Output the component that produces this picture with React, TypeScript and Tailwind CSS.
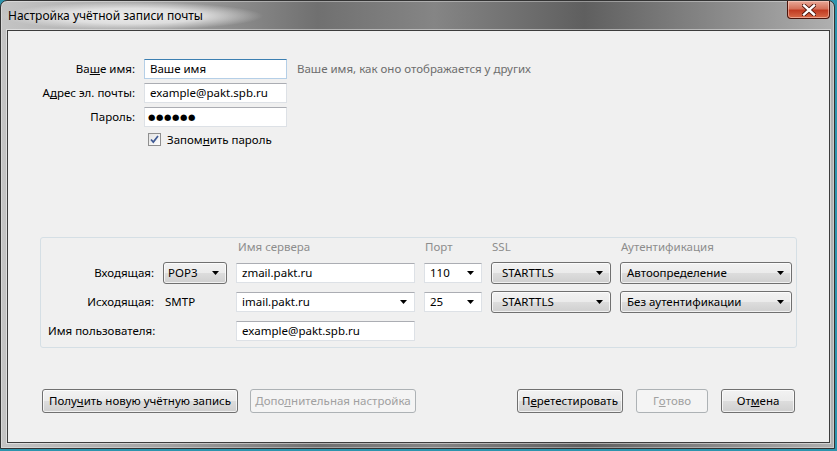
import React from "react"

const font = { fontFamily: '"Noto Sans", "Open Sans", sans-serif' }

function Arrow() {
  return (
    <svg width="7" height="4" viewBox="0 0 7 4" className="shrink-0">
      <path d="M0 0h7L3.5 4z" fill="#000" />
    </svg>
  )
}

function TextBox({ value, w, focused }: { value: string; w: string; focused?: boolean }) {
  return (
    <div
      className={`${w} h-[20px] bg-white border flex items-center px-[5px] text-black ${
        focused ? "border-[#b5cfe7] border-t-[#3c7fb1]" : "border-[#dde1e6] border-t-[#abadb3]"
      }`}
    >
      {value}
    </div>
  )
}

function Combo({ value, w }: { value: string; w: string }) {
  return (
    <div className={`${w} h-[20px] bg-white border border-[#dde1e6] border-t-[#abadb3] flex items-center justify-between pl-[5px] pr-[7px]`}>
      <span>{value}</span>
      <Arrow />
    </div>
  )
}

function SelectBtn({ value, w, pad }: { value: string; w: string; pad: string }) {
  return (
    <div
      className={`${w} ${pad} h-[22px] rounded-[3px] border border-[#707070] bg-[linear-gradient(#f2f2f2,#ebebeb_50%,#dddddd_50%,#cfcfcf)] shadow-[inset_0_0_0_1px_rgba(255,255,255,0.7)] flex items-center justify-between pr-[7px]`}
    >
      <span>{value}</span>
      <Arrow />
    </div>
  )
}

function Button({ children, w, disabled }: { children: React.ReactNode; w: string; disabled?: boolean }) {
  return (
    <div
      className={`${w} h-[24px] rounded-[3px] border flex items-center justify-center ${
        disabled
          ? "border-[#adb2b5] bg-[#f4f4f4] text-[#a0a0a0]"
          : "border-[#707070] bg-[linear-gradient(#f2f2f2,#ebebeb_50%,#dddddd_50%,#cfcfcf)] shadow-[inset_0_0_0_1px_rgba(255,255,255,0.7)] text-black"
      }`}
    >
      {children}
    </div>
  )
}

export default function App() {
  return (
    <div className="w-[837px] h-[451px] overflow-hidden bg-[#2d94ad] text-[11.5px] leading-none" style={font}>
      <div className="w-[835px] h-[449px] flex flex-col rounded-t-[7px] border border-[#333] bg-[linear-gradient(90deg,#c4c4c4_0%,#a2a2a2_20%,#707070_38%,#858585_52%,#5f5f5f_70%,#8e8e8e_88%,#b0b0b0_100%)] shadow-[inset_0_0_0_1px_rgba(255,255,255,0.35)]">
        {/* title bar */}
        <div className="h-[29px] flex justify-between shrink-0">
          <div className="mt-[1px] h-[28px] pl-[7px] pr-[60px] flex items-center text-black text-[12px] bg-[radial-gradient(closest-side,rgba(240,240,240,0.95)_0%,rgba(235,235,235,0.8)_55%,rgba(220,220,220,0)_100%)]">
            Настройка учётной записи почты
          </div>
          <div className="mr-[4px] w-[43px] h-[18px] rounded-b-[4px] border border-t-0 border-[#4a140b] bg-[linear-gradient(#e9a897,#d5725b_45%,#c13b22_55%,#d86a48)] shadow-[inset_0_0_0_1px_rgba(255,220,210,0.5)] flex items-center justify-center">
            <svg width="14" height="12" viewBox="0 0 14 12">
              <path d="M2 1.5l10 9M12 1.5l-10 9" stroke="#4b1209" strokeWidth="4.2" strokeLinecap="square" />
              <path d="M2 1.5l10 9M12 1.5l-10 9" stroke="#fff" strokeWidth="2.4" strokeLinecap="square" />
            </svg>
          </div>
        </div>

        {/* client area */}
        <div className="flex-1 ml-[6px] mr-[4px] mb-[5px] border border-[#3c3c3c] bg-[#f0f0f0] flex flex-col shadow-[0_0_0_1px_rgba(255,255,255,0.45)]">
          {/* account form */}
          <div className="pt-[28px] grid grid-cols-[127px_143px_auto] gap-x-[9px] gap-y-[4px] items-center">
            <div className="text-right">
              Ва<u>ш</u>е имя:
            </div>
            <TextBox value="Ваше имя" w="w-[143px]" focused />
            <div className="pl-[1px] text-[#6d6d6d]">Ваше имя, как оно отображается у других</div>

            <div className="text-right">
              А<u>д</u>рес эл. почты:
            </div>
            <TextBox value="example@pakt.spb.ru" w="w-[143px]" />
            <div />

            <div className="text-right">Пароль:</div>
            <div
              className="w-[143px] h-[20px] bg-white border border-[#dde1e6] border-t-[#abadb3] flex items-center px-[3px] text-[8.5px] tracking-[0.6px]"
              style={{ fontFamily: '"DejaVu Sans", sans-serif' }}
            >
              ●●●●●●
            </div>
            <div />
          </div>

          <div className="mt-[6px] ml-[140px] flex items-center gap-[6px]">
            <div className="w-[13px] h-[13px] border border-[#8f8f8f] bg-[linear-gradient(135deg,#e2e2e2,#fff)] flex items-center justify-center">
              <svg width="9" height="9" viewBox="0 0 9 9">
                <path d="M1 4.5l2.3 2.6L8 1" stroke="#3f5a94" strokeWidth="1.7" fill="none" />
              </svg>
            </div>
            <span>
              Запом<u>н</u>ить пароль
            </span>
          </div>

          {/* server settings */}
          <div className="mt-[91px] ml-[32px] mr-[32px] h-[111px] rounded-[3px] border border-[#d5dfe5] pl-[7px] pt-[1px]">
            <div className="grid grid-cols-[106px_64px_179px_58px_120px_172px] gap-x-[9px] gap-y-[7px] items-center">
              <div className="h-[16px]" />
              <div />
              <div className="pl-[2px] text-[#8d8d8d]">Имя сервера</div>
              <div className="pl-[1px] text-[#8d8d8d]">Порт</div>
              <div className="pl-[1px] text-[#8d8d8d]">SSL</div>
              <div className="pl-[1px] text-[#8d8d8d]">Аутентификация</div>

              <div className="text-right">Входящая:</div>
              <SelectBtn value="POP3" w="w-[64px]" pad="pl-[4px]" />
              <TextBox value="zmail.pakt.ru" w="w-[179px]" />
              <Combo value="110" w="w-[58px]" />
              <SelectBtn value="STARTTLS" w="w-[120px]" pad="pl-[10px]" />
              <SelectBtn value="Автоопределение" w="w-[172px]" pad="pl-[6px]" />

              <div className="h-[22px] flex items-center justify-end">Исходящая:</div>
              <div className="pl-[2px]">SMTP</div>
              <Combo value="imail.pakt.ru" w="w-[179px]" />
              <Combo value="25" w="w-[58px]" />
              <SelectBtn value="STARTTLS" w="w-[120px]" pad="pl-[10px]" />
              <SelectBtn value="Без аутентификации" w="w-[172px]" pad="pl-[6px]" />

              <div className="col-span-2 h-[22px] flex items-center">Имя пользователя:</div>
              <TextBox value="example@pakt.spb.ru" w="w-[179px]" />
            </div>
          </div>

          {/* buttons */}
          <div className="mt-[41px] px-[34px] flex justify-between">
            <div className="flex gap-[12px]">
              <Button w="w-[196px]">
                Полу<u>ч</u>ить новую учётную запись
              </Button>
              <Button w="w-[166px]" disabled>
                Допо<u>л</u>нительная настройка
              </Button>
            </div>
            <div className="flex gap-[13px]">
              <Button w="w-[106px]">
                П<u>е</u>ретестировать
              </Button>
              <Button w="w-[72px]" disabled>
                Г<u>о</u>тово
              </Button>
              <Button w="w-[74px]">
                От<u>м</u>ена
              </Button>
            </div>
          </div>
        </div>
      </div>
    </div>
  )
}
